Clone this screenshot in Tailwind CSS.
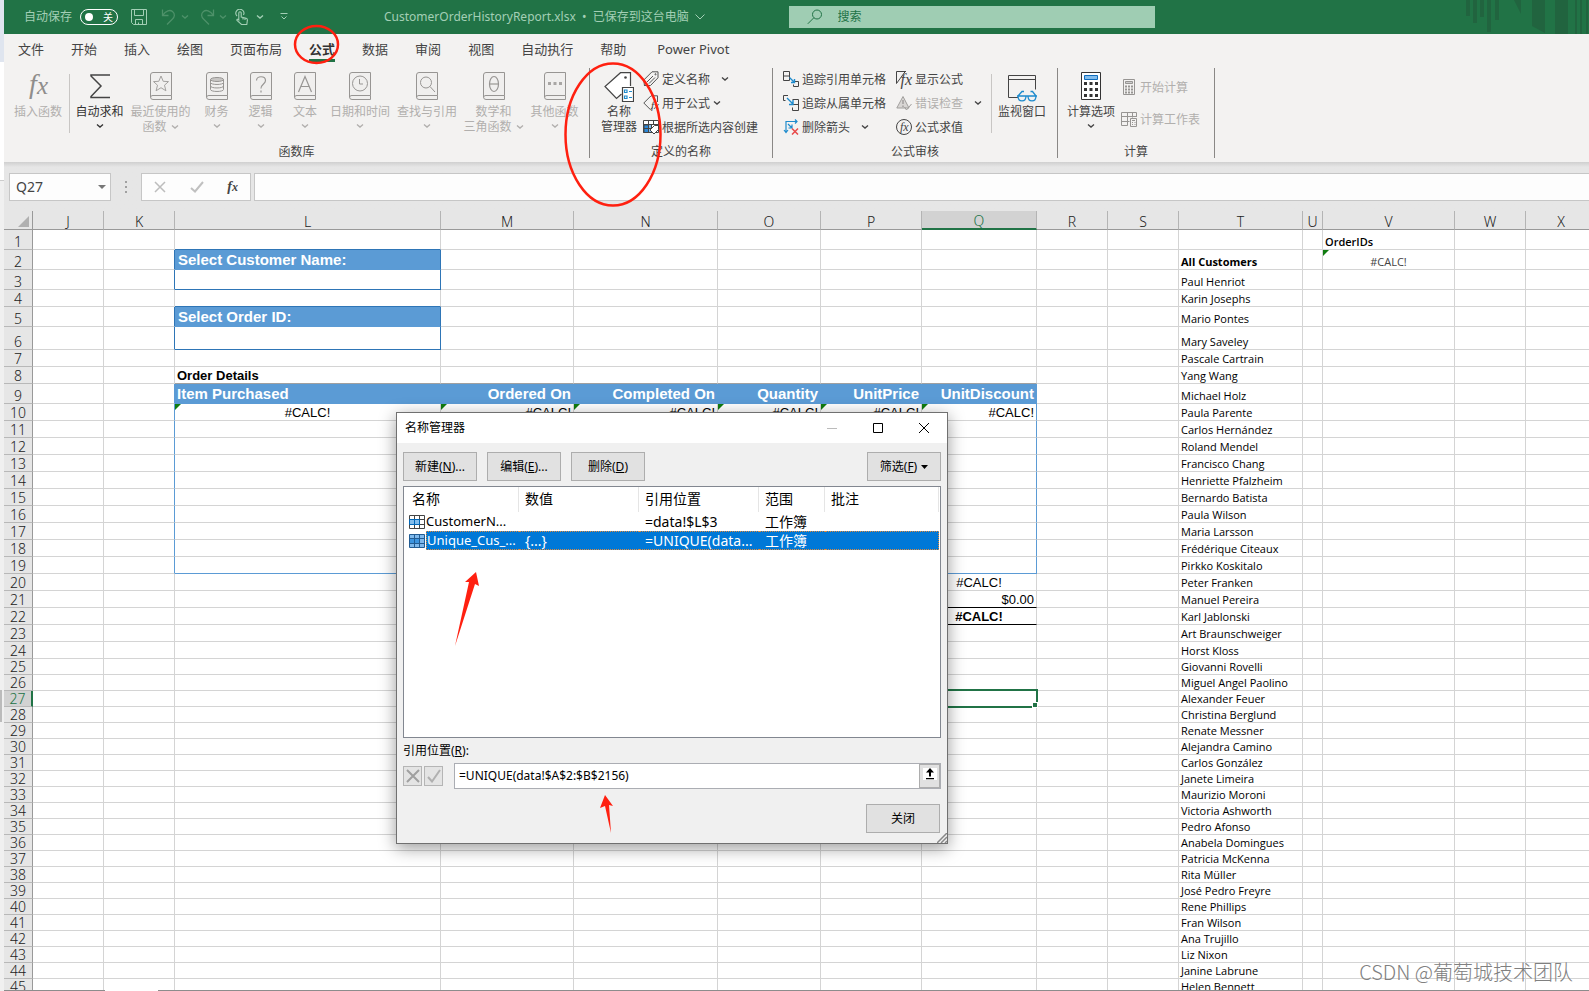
<!DOCTYPE html>
<html lang="zh-CN">
<head>
<meta charset="utf-8">
<title>CustomerOrderHistoryReport.xlsx</title>
<script src="https://cdn.jsdelivr.net/npm/@tailwindcss/browser@4"></script>
</head>
<body class="relative h-screen overflow-hidden bg-[#f0f0f0] font-['Noto_Sans','Noto_Sans_CJK_SC',sans-serif] text-xs text-[#444]">

<svg class="hidden" aria-hidden="true">
  <symbol id="chev" viewBox="0 0 8 6"><path d="M1 1.5l3 2.6 3-2.6" fill="none" stroke="currentColor" stroke-width="1.3"/></symbol>
  <symbol id="book" viewBox="0 0 22 28"><path d="M3 .5h18.500v27H3A2.500 2.500 0 0 1 .5 25V3A2.500 2.500 0 0 1 3 .5z" fill="#f0efee"/><path d="M21.500 23.500V.5H3A2.500 2.500 0 0 0 .5 3v22A2.500 2.500 0 0 0 3 27.500h18.500v-4H3A2 2 0 0 0 .7 25" fill="none" stroke="#979593"/></symbol>
  <symbol id="names" viewBox="0 0 16 14"><path d="M.5.500h15v13H.5z" fill="#fff" stroke="#444"/><path d="M1 5h10v4.500H1z" fill="#83bdec"/><path d="M.5 4.500h15M.5 9.500h15M5.500.5v13M10.500.5v13" stroke="#444" fill="none"/><path d="M.5 4.500h10v5H.5zM5.500 4.500v5" stroke="#0067b8" fill="none"/></symbol>
  <symbol id="names-on" viewBox="0 0 16 14"><path d="M.5.500h15v13H.5z" fill="#7fb9ec" stroke="#225c93"/><path d="M1 5h10v4.500H1z" fill="#3d95e0"/><path d="M.5 4.500h15M.5 9.500h15M5.500.5v13M10.500.5v13" stroke="#225c93" fill="none"/></symbol>
</svg>

<div class="flex h-full flex-col pl-1">
  <!-- Title bar -->
  <header class="relative flex h-[34px] shrink-0 items-center bg-[#217346] text-[#a3cfb5]">
    <svg class="absolute right-0 top-0 h-[34px] w-[124px]" viewBox="0 0 124 34" fill="#21643f"><path d="M1 0h4v16H1zM8 0h4v23H8zM15 0h4v17h-4zM22 0h4v32h-4zM30 0h4v20h-4zM49 0h7v14zM67 0h13v33l-13-7zM90 0h13v34H90zM110 0h2v34h-2zM115 0h2v34h-2zM121 0h2v34h-2z"/></svg>
    <span class="ml-5">自动保存</span>
    <button class="ml-2 flex h-4 w-[38px] items-center justify-between rounded-full border border-white px-1 text-[10px] leading-none text-white" aria-label="自动保存"><span class="size-2 rounded-full bg-white"></span><span>关</span></button>
    <button class="ml-[13px]" aria-label="保存"><svg class="size-4" viewBox="0 0 16 16" fill="none" stroke="currentColor"><path d="M.5.500h15v15H2.500l-2-2zM3.500.5v6h9v-6M4.500 15.500v-5h7v5M7.500 15.500v-2"/></svg></button>
    <button class="ml-3.5 text-[#4d9169]" aria-label="撤消"><svg class="size-4" viewBox="0 0 16 16" fill="none" stroke="currentColor" stroke-width="1.300"><path d="M1.500.5v6h6M1.500 6.500C5 1.500 9 .5 11.500 2.500c3 2.500 2 5.500 0 7.500L6 15.500"/></svg></button>
    <svg class="ml-1 h-1.5 w-2 text-[#4d9169]"><use href="#chev"/></svg>
    <button class="ml-2.5 text-[#4d9169]" aria-label="恢复"><svg class="size-4" viewBox="0 0 16 16" fill="none" stroke="currentColor" stroke-width="1.300"><path d="M14.500.5v6h-6M14.500 6.500C11 1.500 7 .5 4.500 2.500c-3 2.500-2 5.500 0 7.500L10 15.500"/></svg></button>
    <svg class="ml-1 h-1.5 w-2 text-[#4d9169]"><use href="#chev"/></svg>
    <button class="ml-2" aria-label="触摸/鼠标模式"><svg class="h-4 w-[13px]" viewBox="0 0 13 16" fill="none" stroke="currentColor" stroke-width="1.100"><path d="M2 7A4 4 0 1 1 8.500 6M3.800 10.500V4a1.200 1.200 0 0 1 2.400 0v4l5 1.200c1 .3 1.300.8 1.200 2L11.800 15.500H6.500L2 11.500c-.6-1 .8-1.800 1.800-.6zM8 8.500v2M10 9v2"/></svg></button>
    <svg class="ml-2 h-1.5 w-2"><use href="#chev"/></svg>
    <svg class="ml-4 h-2 w-2" viewBox="0 0 8 8" fill="none" stroke="currentColor"><path d="M.5.500h7M1.500 3.500l2.500 2.500 2.500-2.500"/></svg>
    <span class="ml-24 whitespace-nowrap">CustomerOrderHistoryReport.xlsx&nbsp; • &nbsp;已保存到这台电脑</span>
    <svg class="ml-1.5 h-2 w-2.5" viewBox="0 0 10 8" fill="none" stroke="currentColor"><path d="M.5 1.500L5 6l4.500-4.500"/></svg>
    <label class="absolute left-1/2 top-1.5 ml-[-8px] flex h-[22px] w-[366px] items-center bg-[#9fcdb3] text-[#217346]">
      <svg class="ml-[18px] size-4" viewBox="0 0 16 16" fill="none" stroke="currentColor"><circle cx="10" cy="5.500" r="4.500"/><path d="M6.800 8.800L.8 14.800"/></svg>
      <input class="ml-[15px] w-60 bg-transparent outline-none placeholder:text-[#217346]" placeholder="搜索" aria-label="搜索">
    </label>
  </header>

  <!-- Ribbon -->
  <section class="flex h-32 shrink-0 flex-col bg-[#f3f2f1]">
    <nav class="flex h-[30px] shrink-0 items-center gap-[27px] pl-3.5 text-[13px] leading-[26px]">
      <button>文件</button><button>开始</button><button>插入</button><button>绘图</button><button>页面布局</button>
      <button class="h-[26px] border-b-3 border-[#217346] font-bold leading-[26px] text-[#333]">公式</button>
      <button>数据</button><button>审阅</button><button>视图</button><button>自动执行</button><button>帮助</button><button class="pl-1">Power Pivot</button>
    </nav>
    <div class="flex grow pt-1 leading-[15px]">
      <div class="flex h-[90px] flex-col border-r border-[#8a8886]">
        <div class="flex grow pt-1 pl-1.5 text-[#b1afad]">
          <button class="flex w-14 flex-col items-center"><svg class="mb-1 h-7 w-6 overflow-visible" viewBox="0 0 24 28" fill="#8f8d8b" font-family="Liberation Serif" font-style="italic" font-size="28"><text x="3" y="21">f</text><text x="11" y="22" font-size="25">x</text></svg><span>插入函数</span></button>
          <span class="mx-[3px] mt-0.5 h-[59px] w-px bg-[#c8c6c4]"></span>
          <button class="flex w-[53px] flex-col items-center text-[#333]"><svg class="mb-1 h-7 w-6" viewBox="0 0 24 28" fill="none" stroke="#444" stroke-width="1.500"><path d="M22 3H3v1l10 10L3 24.500v1h19"/></svg><span>自动求和</span><svg class="mt-1 h-1.5 w-2"><use href="#chev"/></svg></button>
          <button class="flex w-[69px] flex-col items-center"><svg class="mb-1 h-7 w-[22px]" viewBox="0 0 22 28"><use href="#book"/><path d="M11 4l2.200 5.300 5.300.3-4 3.600 1.400 5.600-4.900-3.100-4.900 3.100 1.400-5.600-4-3.600 5.300-.3z" fill="none" stroke="#a3a19f"/></svg><span>最近使用的</span><span class="flex items-center gap-1">函数<svg class="h-1.5 w-2"><use href="#chev"/></svg></span></button>
          <button class="flex w-[43px] flex-col items-center"><svg class="mb-1 h-7 w-[22px]" viewBox="0 0 22 28"><use href="#book"/><g fill="none" stroke="#979593"><ellipse cx="11" cy="7.500" rx="6.500" ry="2" fill="#c8c6c4"/><path d="M4.500 7.500v3c0 2.600 13 2.600 13 0v-3M4.500 10.500v3.500c0 2.600 13 2.600 13 0v-3.500M4.500 14v3.500c0 2.600 13 2.600 13 0V14"/></g></svg><span>财务</span><svg class="mt-1 h-1.5 w-2"><use href="#chev"/></svg></button>
          <button class="flex w-[45px] flex-col items-center"><svg class="mb-1 h-7 w-[22px]" viewBox="0 0 22 28"><use href="#book"/><path d="M6.500 8.500c0-5 9-5 9 0 0 3.500-4.500 3.500-4.500 8M11 18.500v2" fill="none" stroke="#979593" stroke-width="1.200"/></svg><span>逻辑</span><svg class="mt-1 h-1.5 w-2"><use href="#chev"/></svg></button>
          <button class="flex w-11 flex-col items-center"><svg class="mb-1 h-7 w-[22px]" viewBox="0 0 22 28"><use href="#book"/><path d="M4.500 20L11 4.500 17.500 20M6.700 14.500h8.600" fill="none" stroke="#979593" stroke-width="1.200"/></svg><span>文本</span><svg class="mt-1 h-1.5 w-2"><use href="#chev"/></svg></button>
          <button class="flex w-[66px] flex-col items-center"><svg class="mb-1 h-7 w-[22px]" viewBox="0 0 22 28"><use href="#book"/><circle cx="11" cy="11.500" r="7.500" fill="none" stroke="#979593"/><path d="M10.500 7v5H14" fill="none" stroke="#979593"/></svg><span>日期和时间</span><svg class="mt-1 h-1.5 w-2"><use href="#chev"/></svg></button>
          <button class="flex w-[68px] flex-col items-center"><svg class="mb-1 h-7 w-[22px]" viewBox="0 0 22 28"><use href="#book"/><circle cx="10" cy="10.500" r="5.500" fill="none" stroke="#979593"/><path d="M14 14.500l5 5.500" stroke="#979593"/></svg><span>查找与引用</span><svg class="mt-1 h-1.5 w-2"><use href="#chev"/></svg></button>
          <button class="flex w-[65px] flex-col items-center"><svg class="mb-1 h-7 w-[22px]" viewBox="0 0 22 28"><use href="#book"/><ellipse cx="11" cy="12" rx="4.500" ry="7.500" fill="none" stroke="#979593" stroke-width="1.200"/><path d="M6.500 12h9" stroke="#979593" stroke-width="1.200"/></svg><span>数学和</span><span class="flex items-center gap-1 whitespace-nowrap">三角函数<svg class="h-1.5 w-2"><use href="#chev"/></svg></span></button>
          <button class="flex w-[63px] flex-col items-center pr-1.5"><svg class="mb-1 h-7 w-[22px]" viewBox="0 0 22 28"><use href="#book"/><path d="M4 10h3v3H4zM9.500 10h3v3h-3zM15 10h3v3h-3z" fill="#a8a6a4"/></svg><span>其他函数</span><svg class="mt-1 h-1.5 w-2"><use href="#chev"/></svg></button>
        </div>
        <div class="text-center leading-[13px]">函数库</div>
      </div>

      <div class="flex h-[90px] w-[183px] flex-col border-r border-[#8a8886]">
        <div class="flex grow pt-1">
          <button class="ml-[9px] flex w-10 flex-col items-center whitespace-nowrap"><svg class="mb-0.5 h-[30px] w-[30px]" viewBox="0 0 30 30" fill="none" stroke="#444" stroke-width="1.200"><path d="M26.500 14V.700H16.500L1 14.500l11.500 12 5-4.500" fill="#fff"/><circle cx="21.500" cy="5.500" r="1.300" fill="#444" stroke="none"/><path d="M18.500 15.500h11v14h-11z" fill="#fff"/><path d="M20.500 18h2.500v2.500h-2.500zM20.500 24h2.500v2.500h-2.500zM25 19.500h3M25 25.500h3" stroke="#1e8bcd"/></svg><span>名称</span><span>管理器</span></button>
          <div class="ml-1 flex flex-col">
            <button class="flex h-6 items-center gap-[3px] pb-2.5"><svg class="size-4" viewBox="0 0 16 16" fill="none" stroke="#555"><path d="M1.500 15L.8 9 9 .8h6v6L7.500 14.500H1.500zM4 11l6-6M6 12.500l6-6"/><circle cx="12.500" cy="3.300" r=".6"/></svg>定义名称<svg class="ml-2 h-1.5 w-2"><use href="#chev"/></svg></button>
            <button class="flex h-6 items-center gap-[3px] pb-2.5"><svg class="size-4 overflow-visible" viewBox="0 0 16 16" fill="none" stroke="#555"><path d="M14.500 7V.8H8L.8 8l6.500 6.500 2-2"/><text x="8" y="14" font-family="Liberation Serif" font-style="italic" font-size="11" fill="#444" stroke="none">fx</text></svg>用于公式<svg class="h-1.5 w-2"><use href="#chev"/></svg></button>
            <button class="flex h-6 items-center gap-[3px] whitespace-nowrap pb-2.5"><svg class="size-4" viewBox="0 0 16 16" fill="none" stroke="#444"><path d="M.5 1.500h15v12H.5z" fill="#fff"/><path d="M.5 5.500h8v8h-8z" fill="#83bdec"/><path d="M1 6h4.500v7.500H1z" fill="#2b88d8"/><path d="M.5 5.500h15M5.500 1.500v12M10.500 1.500v4M.5 9.500h8"/><path d="M15.500 6.500h-4L7 11l4 4 4.500-4.500z" fill="#fff"/></svg>根据所选内容创建</button>
          </div>
        </div>
        <div class="text-center leading-[13px]">定义的名称</div>
      </div>

      <div class="flex h-[90px] w-[285px] flex-col border-r border-[#8a8886]">
        <div class="flex grow pt-1">
          <div class="ml-2.5 flex w-[113px] flex-col">
            <button class="flex h-6 items-center gap-[3px] whitespace-nowrap pb-2.5"><svg class="size-4" viewBox="0 0 16 16" fill="none" stroke="#444"><path d="M.5.500h6v9h-6zM.5 5h6M12 10.500h3.500v5h-5v-2"/><path d="M6.500 6.500l5 5M11.500 8v3.500H8" stroke="#1e8bcd" stroke-width="1.400"/></svg>追踪引用单元格</button>
            <button class="flex h-6 items-center gap-[3px] whitespace-nowrap pb-2.5"><svg class="size-4" viewBox="0 0 16 16" fill="none" stroke="#444"><path d="M5 .5H.5v5h2M9.500 4.500h6v11h-6v-3M9.500 9.500h6"/><path d="M4 3l6 6M10 5v4.500H6" stroke="#1e8bcd" stroke-width="1.400"/></svg>追踪从属单元格</button>
            <button class="flex h-6 items-center gap-[3px] whitespace-nowrap pb-2.5"><svg class="size-4" viewBox="0 0 16 16" fill="none" stroke="#1e8bcd" stroke-width="1.200"><path d="M3 13V2.500h11M12 .5l2 2-2 2M1 11l2 2.500L5 11M5 5l4 4M9 5.500V9H5.500"/><path d="M9 9.500l6 6M15 9.500l-6 6" stroke="#e84a4a" stroke-width="1.500"/></svg>删除箭头<svg class="ml-2 h-1.5 w-2"><use href="#chev"/></svg></button>
          </div>
          <div class="flex w-[95px] flex-col">
            <button class="flex h-6 items-center gap-[3px] whitespace-nowrap pb-2.5"><svg class="size-4 overflow-visible" viewBox="0 0 16 16" fill="none" stroke="#444"><path d="M10 .5H.5v12L9 .8"/><text x="4.500" y="13.500" font-family="Liberation Serif" font-style="italic" font-size="16" fill="#444" stroke="none">fx</text></svg>显示公式</button>
            <button class="flex h-6 items-center gap-[3px] whitespace-nowrap pb-2.5 text-[#b1afad]"><svg class="size-4" viewBox="0 0 16 16" fill="none" stroke="#a19f9d"><path d="M7 1.500l6 11.500H.8z" fill="#d8d6d4"/><path d="M7 5v4M7 10.500v1.500" stroke-width="1.500"/><path d="M8.500 12l2 3 5-6"/></svg>错误检查<svg class="ml-2 h-1.5 w-2 text-[#444]"><use href="#chev"/></svg></button>
            <button class="flex h-6 items-center gap-[3px] whitespace-nowrap pb-2.5"><svg class="size-4" viewBox="0 0 16 16" fill="none" stroke="#444"><circle cx="8" cy="8" r="7.500"/><text x="4" y="11.500" font-family="Liberation Serif" font-style="italic" font-size="12" fill="#444" stroke="none">fx</text></svg>公式求值</button>
          </div>
          <span class="mt-0.5 h-[59px] w-px bg-[#c8c6c4]"></span>
          <button class="ml-1.5 flex w-12 flex-col items-center whitespace-nowrap"><svg class="mb-0.5 h-[30px] w-[30px]" viewBox="0 0 30 30" fill="none" stroke="#444"><path d="M11 25.500H1.500v-22h27v14M1.500 7.500h27" /><path d="M10 24h20M11 24c0 6.500 8 6.500 8 0M21 24c0 6.500 8 6.500 8 0M11 24l4-4.500h2M29 24l-3.500-4.500h-2" stroke="#1e8bcd" stroke-width="1.300"/></svg><span>监视窗口</span></button>
        </div>
        <div class="text-center leading-[13px]">公式审核</div>
      </div>

      <div class="flex h-[90px] w-[157px] flex-col border-r border-[#8a8886]">
        <div class="flex grow pt-1">
          <button class="ml-[9px] flex w-12 flex-col items-center"><svg class="mb-1 h-7 w-5" viewBox="0 0 20 28"><path d="M.5.500h19v27H.5z" fill="#fff" stroke="#333"/><path d="M3.500 3.500h13v4h-13z" fill="#83bdec" stroke="#0f6cbd"/><path d="M3 10h3v3H3zM8.500 10h3v3h-3zM14 10h3v3h-3zM3 16h3v3H3zM8.500 16h3v3h-3zM14 16h3v3h-3zM3 22h3v3H3zM8.500 22h3v3h-3zM14 22h3v3h-3z" fill="#333"/></svg><span>计算选项</span><svg class="mt-1 h-1.5 w-2"><use href="#chev"/></svg></button>
          <div class="ml-1.5 flex flex-col gap-4 pt-[7px] text-[#b1afad]">
            <button class="flex h-4 items-center gap-[3px] whitespace-nowrap"><svg class="size-4" viewBox="0 0 16 16"><path d="M2.500.500h11v15h-11z" fill="none" stroke="#979593"/><path d="M4.500 2.500h7v2h-7z" fill="#ccc" stroke="#979593"/><path d="M4 6.500h2v2H4zM7 6.500h2v2H7zM10 6.500h2v2h-2zM4 9.500h2v2H4zM7 9.500h2v2H7zM10 9.500h2v2h-2zM4 12.500h2v2H4zM7 12.500h2v2H7zM10 12.500h2v2h-2z" fill="#979593"/></svg>开始计算</button>
            <button class="flex h-4 items-center gap-[3px] whitespace-nowrap"><svg class="size-4" viewBox="0 0 16 16" fill="none" stroke="#979593"><path d="M15.500 6V1.500H.5v13h6V1.500M.5 5.500h15M.5 10.500h8M11.500 1.500v5M9.500 7.500h6v8h-6z"/><path d="M11 9.500h3M11 11.500h1M13.500 11.500h1M11 13.500h1M13.500 13.500h1"/></svg>计算工作表</button>
          </div>
        </div>
        <div class="text-center leading-[13px]">计算</div>
      </div>
    </div>
  </section>

  <!-- Formula bar -->
  <section class="flex h-[49px] shrink-0 bg-[#e6e6e6] bg-linear-to-b from-[#cfcfcf] to-[#e6e6e6] to-[5px] pt-[11px] pl-[5px]">
    <div class="flex h-7 w-[102px] items-center justify-between border border-[#c6c6c6] bg-[#fdfdfd] pl-1.5 pr-1">
      <input class="w-16 bg-transparent text-sm outline-none" value="Q27" aria-label="名称框">
      <svg class="h-1 w-2" viewBox="0 0 8 4"><path d="M0 0h8L4 4z" fill="#777"/></svg>
    </div>
    <svg class="mx-3.5 mt-2 h-3 w-0.5" viewBox="0 0 2 12" fill="#a0a0a0"><path d="M0 0h2v2H0zM0 5h2v2H0zM0 10h2v2H0z"/></svg>
    <div class="flex h-7 w-[110px] items-center justify-between border border-[#c6c6c6] bg-[#fdfdfd] px-3">
      <button aria-label="取消"><svg class="size-3" viewBox="0 0 12 12" stroke="#bdbdbd" stroke-width="1.500"><path d="M1 1l10 10M11 1L1 11"/></svg></button>
      <button aria-label="输入"><svg class="h-3 w-3.5" viewBox="0 0 14 12" fill="none" stroke="#c0c0c0" stroke-width="2"><path d="M1 7l4 3.500L13 1"/></svg></button>
      <button class="font-['Liberation_Serif',serif] text-sm font-bold italic leading-5" aria-label="插入函数">f<span class="text-xs">x</span></button>
    </div>
    <input class="ml-[3px] h-7 grow border border-r-0 border-[#c6c6c6] bg-[#fdfdfd] px-2 text-sm outline-none" aria-label="编辑栏">
  </section>

  <!-- Worksheet -->
  <main class="min-h-0 grow overflow-hidden bg-white">
    <table class="w-[1593px] table-fixed border-separate border-spacing-0 whitespace-nowrap text-black">
      <colgroup id="cols"></colgroup>
      <thead><tr id="head"></tr></thead>
      <tbody id="rows"></tbody>
    </table>
  </main>
  <footer class="flex h-px shrink-0 bg-[#8c8c8c]"><span class="ml-[101px] w-[53px] bg-white"></span></footer>
</div>

<!-- Edge of the window behind -->
<div class="absolute left-0 top-0 flex h-full w-1 flex-col bg-[#f0f0f0]"><span class="h-[62px] bg-[#dfe5ef]"></span><span class="h-[119px] border-b border-[#ccc] bg-white"></span><span class="mt-[509px] h-8 w-0.5 bg-[#bbb]"></span></div>

<!-- Name manager -->
<section role="dialog" aria-labelledby="dlg" class="absolute left-[396px] top-[412px] z-30 flex h-[432px] w-[552px] flex-col border border-[#707070] bg-[#f0f0f0] text-black shadow-[0_4px_16px_rgba(0,0,0,0.4)]">
  <header class="flex h-[30px] items-center bg-white pl-2">
    <h2 id="dlg" class="grow">名称管理器</h2>
    <button class="w-[46px]" aria-label="最小化"><svg class="mx-auto h-2.5 w-2.5" viewBox="0 0 10 10"><path d="M0 5.500h10" stroke="#bbb"/></svg></button>
    <button class="w-[46px]" aria-label="最大化"><svg class="mx-auto h-2.5 w-2.5" viewBox="0 0 10 10"><path d="M.5.500h9v9h-9z" stroke="#000" fill="none"/></svg></button>
    <button class="w-[46px]" aria-label="关闭窗口"><svg class="mx-auto h-2.5 w-2.5" viewBox="0 0 10 10"><path d="M0 0l10 10M10 0L0 10" stroke="#000"/></svg></button>
  </header>
  <div class="flex gap-2.5 px-1.5 pt-[9px]">
    <button class="h-[29px] w-[74px] border border-[#adadad] bg-[#e1e1e1]">新建(<u>N</u>)...</button>
    <button class="h-[29px] w-[74px] border border-[#adadad] bg-[#e1e1e1]">编辑(<u>E</u>)...</button>
    <button class="h-[29px] w-[74px] border border-[#adadad] bg-[#e1e1e1]">删除(<u>D</u>)</button>
    <button class="ml-auto flex h-[29px] w-[74px] items-center justify-center gap-1 border border-[#adadad] bg-[#e1e1e1]"><span>筛选(<u>F</u>)</span><svg class="h-1 w-[7px]" viewBox="0 0 7 4"><path d="M0 0h7L3.500 4z"/></svg></button>
  </div>
  <div class="mx-1.5 mt-[5px] h-[252px] border border-[#828790] bg-white pr-px">
    <table class="w-full table-fixed border-separate border-spacing-0 whitespace-nowrap text-sm leading-[17px]">
      <colgroup><col class="w-[22px]"><col class="w-[93px]"><col class="w-[120px]"><col class="w-[120px]"><col class="w-[66px]"><col></colgroup>
      <thead><tr class="h-[25px] text-left">
        <th colspan="2" class="border-r border-[#e5e5e5] pb-0.5 pl-2 font-normal">名称</th><th class="border-r border-[#e5e5e5] pb-0.5 pl-1.5 font-normal">数值</th><th class="border-r border-[#e5e5e5] pb-0.5 pl-1.5 font-normal">引用位置</th><th class="border-r border-[#e5e5e5] pb-0.5 pl-1.5 font-normal">范围</th><th class="border-r border-[#e5e5e5] pb-0.5 pl-1.5 font-normal">批注</th>
      </tr></thead>
      <tbody>
        <tr class="h-[19px]"><td><svg class="ml-[5px] h-3.5 w-4"><use href="#names"/></svg></td><td class="overflow-hidden text-[13px]">CustomerN...</td><td></td><td class="pl-1.5">=data!$L$3</td><td class="pl-1.5">工作簿</td><td></td></tr>
        <tr class="h-[19px] text-white"><td><svg class="ml-[5px] h-3.5 w-4"><use href="#names-on"/></svg></td><td class="border-y border-l border-dotted border-[#e08a3c] bg-[#0078d7] text-[13px]">Unique_Cus_...</td><td class="border-y border-dotted border-[#e08a3c] bg-[#0078d7] pl-1.5">{...}</td><td class="border-y border-dotted border-[#e08a3c] bg-[#0078d7] pl-1.5">=UNIQUE(data...</td><td class="border-y border-dotted border-[#e08a3c] bg-[#0078d7] pl-1.5">工作簿</td><td class="border-y border-r border-dotted border-[#e08a3c] bg-[#0078d7]"></td></tr>
      </tbody>
    </table>
  </div>
  <label for="ref" class="mx-1.5 mt-[5px] leading-4">引用位置(<u>R</u>):</label>
  <div class="mx-1.5 mt-1 flex h-[26px] items-center">
    <button class="flex h-5 w-[19px] items-center justify-center border border-[#b5b5b5] bg-[#e4e4e4]" aria-label="取消更改"><svg class="size-3.5" viewBox="0 0 14 14" stroke="#a0a0a0" stroke-width="2"><path d="M1 1l12 12M13 1L1 13"/></svg></button>
    <button class="ml-0.5 flex h-5 w-[19px] items-center justify-center border border-[#b5b5b5] bg-[#e4e4e4]" aria-label="接受更改"><svg class="size-3.5" viewBox="0 0 14 14" fill="none" stroke="#b0b0b0" stroke-width="2"><path d="M1 8l4 4.500L13 1"/></svg></button>
    <div class="ml-[11px] flex h-full grow border border-[#abadb3] bg-white">
      <input id="ref" class="min-w-0 grow px-1 outline-none" value="=UNIQUE(data!$A$2:$B$2156)">
      <button class="flex w-[21px] justify-center border border-[#adadad] bg-[#e1e1e1] pt-[3px]" aria-label="折叠"><svg class="h-3 w-3.5 bg-white" viewBox="0 0 14 12"><path d="M7 0l4 4.500H8V8.500H6V4.500H3zM3 10h8v1.200H3z"/></svg></button>
    </div>
  </div>
  <button class="ml-auto mr-[7px] mt-[15px] h-[29px] w-[74px] border border-[#adadad] bg-[#e1e1e1]">关闭</button>
  <svg class="absolute bottom-0 right-0 size-2.5" viewBox="0 0 10 10" stroke="#888" stroke-width="1.500"><path d="M0 10L10 0M4 10l6-6M8 10l2-2"/></svg>
</section>

<!-- Annotations and watermark -->
<svg class="pointer-events-none absolute left-0 top-0 z-40 h-[991px] w-[1589px]" viewBox="0 0 1589 991" fill="none" stroke="#ff2010" stroke-width="2.500">
  <ellipse cx="316.500" cy="44.500" rx="21.500" ry="18.500"/>
  <ellipse cx="613" cy="134.500" rx="47.500" ry="71"/>
  <g fill="#ff2010" stroke="none"><path d="M476 572l3 14-4-2-20 62 14-64-4 0z"/><path d="M605 795l8 11-4-1 2 28-6-27-5 2z"/></g>
</svg>
<p class="pointer-events-none absolute bottom-[5px] right-4 font-['Noto_Sans_CJK_SC',sans-serif] text-xl font-light leading-7 text-[#808080]">CSDN @葡萄城技术团队</p>

<script>
const columns = [['J',71],['K',71],['L',266],['M',133],['N',144],['O',103],['P',101],['Q',115],['R',71],['S',71],['T',124],['U',20],['V',132],['W',71],['X',71]];
const heights = {1:20,2:20,3:20,4:17,5:20,6:23,7:17,8:17,9:20};
const customers = ['Paul Henriot','Karin Josephs','Mario Pontes','Mary Saveley','Pascale Cartrain','Yang Wang','Michael Holz','Paula Parente','Carlos Hernández','Roland Mendel','Francisco Chang','Henriette Pfalzheim','Bernardo Batista','Paula Wilson','Maria Larsson','Frédérique Citeaux','Pirkko Koskitalo','Peter Franken','Manuel Pereira','Karl Jablonski','Art Braunschweiger','Horst Kloss','Giovanni Rovelli','Miguel Angel Paolino','Alexander Feuer','Christina Berglund','Renate Messner','Alejandra Camino','Carlos González','Janete Limeira','Maurizio Moroni','Victoria Ashworth','Pedro Afonso','Anabela Domingues','Patricia McKenna','Rita Müller','José Pedro Freyre','Rene Phillips','Fran Wilson','Ana Trujillo','Liz Nixon','Janine Labrune','Helen Bennett'];
const arial = "font-['Liberation_Sans',sans-serif] ";
const head = arial + 'bg-[#5b9bd5] text-[15px] font-bold text-white pb-0.5 ';
const list = "font-['Open_Sans',sans-serif] text-[11px] pl-0.5 ";
const flag = '<i class="absolute left-0 top-0 size-1.5 bg-[#107c10] [clip-path:polygon(0_0,100%_0,0_100%)]"></i>';
const cells = {
  L2:['Select Customer Name:', head+'pl-[3px] '], L5:['Select Order ID:', head+'pl-[3px] '],
  L8:['Order Details', arial+'text-[13px] font-bold pl-0.5 '],
  L9:['Item Purchased', head+'pl-0.5 '], M9:['Ordered On', head+'text-right pr-0.5 '], N9:['Completed On', head+'text-right pr-0.5 '],
  O9:['Quantity', head+'text-right pr-0.5 '], P9:['UnitPrice', head+'text-right pr-0.5 '], Q9:['UnitDiscount', head+'text-right pr-0.5 '],
  L10:[flag+'#CALC!', arial+'text-[13px] text-center '],
  Q20:['#CALC!', arial+'text-[13px] text-center '], Q21:['$0.00', arial+'text-[13px] text-right pr-0.5 '], Q22:['#CALC!', arial+'text-[13px] font-bold text-center '],
  Q27:['<i class="absolute -left-0.5 -top-0.5 z-10 h-[19px] w-[118px] border-2 border-[#217346]"></i><i class="absolute -bottom-0.5 -right-0.5 z-20 size-1.5 border border-white bg-[#217346]"></i>', ''],
  V1:['OrderIDs', list+'font-semibold '], V2:[flag+'#CALC!', "font-['Open_Sans',sans-serif] text-[11px] text-center text-[#444] "], T2:['All Customers', list+'font-bold ']
};
for (const c of 'MNOPQ') cells[c+10] = [flag+'#CALC!', arial+'text-[13px] text-right pr-0.5 '];
customers.forEach((name, i) => cells['T'+(i+3)] = [name, list]);

function right(c, r) {
  if ((c==='L'||c==='K') && (r===2||r===3||r===5||r===6)) return 'border-r-[#2e75b6] ';
  if (r===9 && 'LMNOPQ'.includes(c)) return 'border-r-[#5b9bd5] ';
  if (r>=9 && r<=19 && (c==='K'||c==='Q')) return 'border-r-[#5b9bd5] ';
  return 'border-r-[#d4d4d4] ';
}
function bottom(c, r) {
  if (c==='L' && (r===1||r===3||r===4||r===6)) return 'border-b-[#2e75b6] ';
  if ('LMNOPQ'.includes(c)) {
    if (r===8) return 'border-b-[#a0a0a0] ';
    if (r===9||r===19) return 'border-b-[#5b9bd5] ';
    if (c==='L' && (r===2||r===5)) return 'border-b-[#5b9bd5] ';
    if (c==='Q' && (r===21||r===22)) return 'border-b-black ';
  }
  return 'border-b-[#d4d4d4] ';
}
document.getElementById('cols').innerHTML = '<col style="width:29px">' + columns.map(c => `<col style="width:${c[1]}px">`).join('');
document.getElementById('head').innerHTML = '<th class="h-[19px] border-r border-b border-[#999] bg-[#e6e6e6] p-0"><svg class="ml-auto mr-[3px] mt-0.5 size-[11px]" viewBox="0 0 11 11"><path d="M11 0v11H0z" fill="#b0b0b0"/></svg></th>' +
  columns.map(([c]) => `<th scope="col" class="${c==='Q' ? 'border-b-2 border-b-[#217346] bg-[#d2d2d2] text-[#217346] leading-[15px] ' : 'border-b border-b-[#999] bg-[#e6e6e6] text-[#222] leading-[15px] '}h-[19px] border-r border-r-[#b4b4b4] p-0 pt-0.5 align-bottom text-sm font-light">${c}</th>`).join('');
let html = '';
for (let r = 1; r <= 45; r++) {
  const h = heights[r] || (r < 25 ? 17 : 16);
  html += `<tr style="height:${h}px"><th scope="row" class="${r===27 ? 'border-r-2 border-r-[#217346] bg-[#d2d2d2] text-[#217346] ' : 'border-r border-r-[#999] bg-[#e6e6e6] text-[#222] '}border-b border-b-[#b8b8b8] p-0 align-bottom text-sm font-light leading-[15px]">${r}</th>`;
  for (const [c] of columns) {
    const [text, cls] = cells[c+r] || ['', ''];
    html += `<td class="relative border-r border-b align-bottom leading-[15px] ${right(c,r)}${bottom(c,r)}${cls}">${text}</td>`;
  }
  html += '</tr>';
}
document.getElementById('rows').innerHTML = html;
</script>
</body>
</html>
